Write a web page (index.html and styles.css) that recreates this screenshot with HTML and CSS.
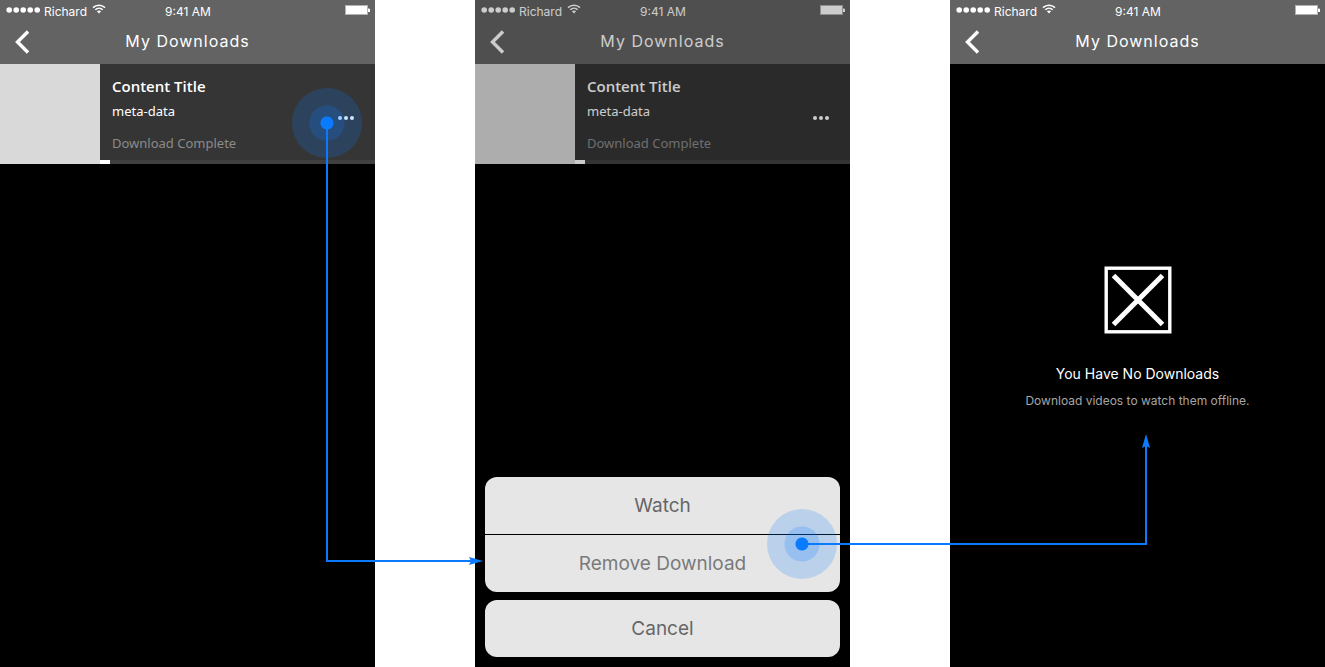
FILE: index.html
```
<!DOCTYPE html>
<html lang="en">
<head>
  <meta charset="UTF-8" />
  <meta name="viewport" content="width=device-width, initial-scale=1" />
  <title>My Downloads</title>
  <link rel="stylesheet" href="styles.css">
</head>
<body>

  <svg class="sprite" aria-hidden="true">
    <symbol id="signal" viewBox="0 0 34 6">
      <circle cx="3.200" cy="3" r="2.800"/><circle cx="10.200" cy="3" r="2.800"/><circle cx="17.200" cy="3" r="2.800"/><circle cx="24.200" cy="3" r="2.800"/><circle cx="31.200" cy="3" r="2.800"/>
    </symbol>
    <symbol id="wifi" viewBox="0 0 14 10">
      <path d="M1 3.6C4.4.3 9.6.3 13 3.6M3.3 5.8c2.1-2 5.3-2 7.4 0" fill="none" stroke="#fff" stroke-width="1.5"/>
      <path d="M4.9 7.3c1.2-1.1 3-1.1 4.2 0L7 9.4z"/>
    </symbol>
    <symbol id="battery" viewBox="0 0 25 10">
      <path d="M0 0h23v10H0zM23 3h1.5v4H23z" fill="#b1b1b1"/>
      <path d="M1 1h21v8H1zM23 4h2v3h-2z"/>
    </symbol>
    <symbol id="back" viewBox="0 0 14 24">
      <path d="M13 1.500L2.500 12 13 22.500" fill="none" stroke="#fff" stroke-width="3.4"/>
    </symbol>
    <symbol id="dots" viewBox="0 0 16 4">
      <circle cx="2" cy="2" r="2"/><circle cx="8" cy="2" r="2"/><circle cx="14" cy="2" r="2"/>
    </symbol>
    <symbol id="arrow" viewBox="0 0 14 8">
      <path d="M14 4L0 8l2-4-2-4z"/>
    </symbol>
  </svg>

  <main class="flow">

    <!-- Downloads list -->
    <section class="phone">
      <header class="top-bar">
        <div class="status">
          <div class="carrier">
            <svg class="signal"><use href="#signal"/></svg>
            <span>Richard</span>
            <svg class="wifi"><use href="#wifi"/></svg>
          </div>
          <span>9:41 AM</span>
          <svg class="battery"><use href="#battery"/></svg>
        </div>
        <div class="nav">
          <button class="back-btn" type="button" aria-label="Back"><svg><use href="#back"/></svg></button>
          <h1>My Downloads</h1>
        </div>
      </header>
      <article class="download">
        <div class="thumb"></div>
        <div class="details">
          <div class="info">
            <h2>Content Title</h2>
            <p class="meta">meta-data</p>
            <p class="state">Download Complete</p>
          </div>
          <button class="more-btn" type="button" aria-label="More options"><svg><use href="#dots"/></svg></button>
          <div class="progress"><div class="progress-bar"></div></div>
        </div>
      </article>
      <div class="hotspot hotspot-more"></div>
      <div class="line line-more"><svg class="arrow"><use href="#arrow"/></svg></div>
    </section>

    <!-- Action sheet -->
    <section class="phone">
      <header class="top-bar">
        <div class="status">
          <div class="carrier">
            <svg class="signal"><use href="#signal"/></svg>
            <span>Richard</span>
            <svg class="wifi"><use href="#wifi"/></svg>
          </div>
          <span>9:41 AM</span>
          <svg class="battery"><use href="#battery"/></svg>
        </div>
        <div class="nav">
          <button class="back-btn" type="button" aria-label="Back"><svg><use href="#back"/></svg></button>
          <h1>My Downloads</h1>
        </div>
      </header>
      <article class="download">
        <div class="thumb"></div>
        <div class="details">
          <div class="info">
            <h2>Content Title</h2>
            <p class="meta">meta-data</p>
            <p class="state">Download Complete</p>
          </div>
          <button class="more-btn" type="button" aria-label="More options"><svg><use href="#dots"/></svg></button>
          <div class="progress"><div class="progress-bar"></div></div>
        </div>
      </article>
      <div class="dim"></div>
      <div class="sheet">
        <div class="sheet-group">
          <button class="sheet-btn" type="button">Watch</button>
          <button class="sheet-btn remove" type="button">Remove Download</button>
        </div>
        <button class="sheet-btn cancel" type="button">Cancel</button>
      </div>
      <div class="hotspot hotspot-remove"></div>
      <div class="line line-remove"><svg class="arrow arrow-up"><use href="#arrow"/></svg></div>
    </section>

    <!-- Empty state -->
    <section class="phone">
      <header class="top-bar">
        <div class="status">
          <div class="carrier">
            <svg class="signal"><use href="#signal"/></svg>
            <span>Richard</span>
            <svg class="wifi"><use href="#wifi"/></svg>
          </div>
          <span>9:41 AM</span>
          <svg class="battery"><use href="#battery"/></svg>
        </div>
        <div class="nav">
          <button class="back-btn" type="button" aria-label="Back"><svg><use href="#back"/></svg></button>
          <h1>My Downloads</h1>
        </div>
      </header>
      <div class="empty">
        <svg class="empty-icon" viewBox="0 0 68 68">
          <rect x="2.200" y="2.200" width="63.600" height="63.600" stroke-width="3.400"/>
          <path d="M9.500 9.500l49 49M58.500 9.500l-49 49" stroke-width="5"/>
        </svg>
        <h2>You Have No Downloads</h2>
        <p>Download videos to watch them offline.</p>
      </div>
    </section>

  </main>

</body>
</html>
```
FILE: styles.css
```
* {
  box-sizing: border-box;
}

body {
  margin: 0;
  background: #fff;
  color: #fff;
  font-family: Inter, 'Liberation Sans', sans-serif;
}

h1, h2, p {
  margin: 0;
}

button {
  border: none;
  padding: 0;
  background: none;
  font-family: inherit;
  cursor: pointer;
}

svg {
  display: block;
  fill: #fff;
}

.sprite {
  display: none;
}

.flow {
  display: flex;
  gap: 100px;
  min-height: 100vh;
  overflow: hidden;
}

.phone {
  position: relative;
  display: flex;
  flex-direction: column;
  flex: 1;
  background: #000;
}

/* header */
.top-bar {
  height: 64px;
  background: #636363;
}

.status {
  display: grid;
  grid-template-columns: 1fr auto 1fr;
  align-items: center;
  height: 22px;
  padding: 0 5px 0 6px;
  font-size: 12px;
}

.carrier {
  display: flex;
  align-items: center;
  gap: 4px;
}

.signal {
  width: 34px;
  height: 6px;
  margin-bottom: 2px;
}

.wifi {
  width: 14px;
  height: 10px;
  margin: 0 0 4px 1px;
}

.battery {
  justify-self: end;
  width: 25px;
  height: 10px;
  margin-bottom: 2px;
}

.nav {
  display: grid;
  grid-template-columns: 1fr auto 1fr;
  align-items: center;
  height: 40px;
  padding: 0 15px;
}

.nav h1 {
  padding-bottom: 2px;
  font-size: 16px;
  font-weight: 400;
  letter-spacing: 1px;
}

.back-btn {
  justify-self: start;
}

.back-btn svg {
  width: 14px;
  height: 24px;
}

/* download row */
.download {
  display: flex;
  height: 100px;
  font-family: 'Noto Sans', 'Open Sans', sans-serif;
}

.thumb {
  width: 100px;
  background: #d9d9d9;
}

.details {
  display: grid;
  grid-template-columns: 1fr auto;
  grid-template-rows: 1fr 4px;
  flex: 1;
  background: #353535;
}

.info {
  padding: 11px 0 0 12px;
}

.info h2 {
  font-family: 'Open Sans', 'Noto Sans', sans-serif;
  font-size: 15px;
  font-weight: 600;
  line-height: 22px;
}

.meta,
.state {
  font-size: 13px;
  line-height: 20px;
}

.meta {
  margin-top: 4px;
}

.state {
  margin-top: 12px;
  color: #8b8b8b;
}

.more-btn {
  width: 58px;
  margin-top: 12px;
}

.more-btn svg {
  width: 16px;
  height: 4px;
  margin: 0 auto;
}

.progress {
  grid-column: 1 / -1;
  background: #404040;
}

.progress-bar {
  width: 10px;
  height: 4px;
  background: #fff;
}

/* action sheet */
.dim {
  position: absolute;
  inset: 0;
  background: rgba(0, 0, 0, 0.2);
}

.sheet {
  position: relative;
  display: flex;
  flex-direction: column;
  gap: 8px;
  margin: auto 10px 10px;
}

.sheet-group {
  display: flex;
  flex-direction: column;
  gap: 1px;
  border-radius: 12px;
  overflow: hidden;
}

.sheet-btn {
  width: 100%;
  height: 57px;
  background: #e6e6e6;
  color: #666;
  font-size: 19px;
}

.remove {
  color: #7a7a7a;
}

.cancel {
  border-radius: 12px;
}

/* empty state */
.empty {
  display: flex;
  flex-direction: column;
  align-items: center;
  padding-top: 202px;
  text-align: center;
}

.empty-icon {
  width: 68px;
  height: 68px;
  fill: none;
  stroke: #fff;
}

.empty h2 {
  margin-top: 28px;
  font-size: 14px;
  font-weight: 400;
  line-height: 24px;
}

.empty p {
  margin-top: 4px;
  color: #a6a6a6;
  font-size: 12px;
  line-height: 22px;
}

/* tap targets and the lines between screens */
.hotspot {
  position: absolute;
  right: 13px;
  z-index: 2;
  width: 70px;
  height: 70px;
  border-radius: 50%;
  background: radial-gradient(circle, #0a7aff 6px, rgba(10, 122, 255, 0.36) 7px, rgba(10, 122, 255, 0.36) 17px, rgba(10, 122, 255, 0.2) 18px);
}

.hotspot-more {
  top: 88px;
}

.hotspot-remove {
  bottom: 88px;
}

.line {
  position: absolute;
  z-index: 3;
  border: 0 solid #0a7aff;
}

.line-more {
  top: 123px;
  right: -102px;
  bottom: 105px;
  left: calc(100% - 49px);
  border-width: 0 0 2px 2px;
}

.line-remove {
  right: calc(-98px - 53%);
  bottom: 122px;
  left: calc(100% - 48px);
  height: 105px;
  border-width: 0 2px 2px 0;
}

.arrow {
  position: absolute;
  right: -6px;
  bottom: -5px;
  width: 14px;
  height: 8px;
  fill: #0a7aff;
}

.arrow-up {
  right: -8px;
  bottom: 98px;
  transform: rotate(-90deg);
}
```
